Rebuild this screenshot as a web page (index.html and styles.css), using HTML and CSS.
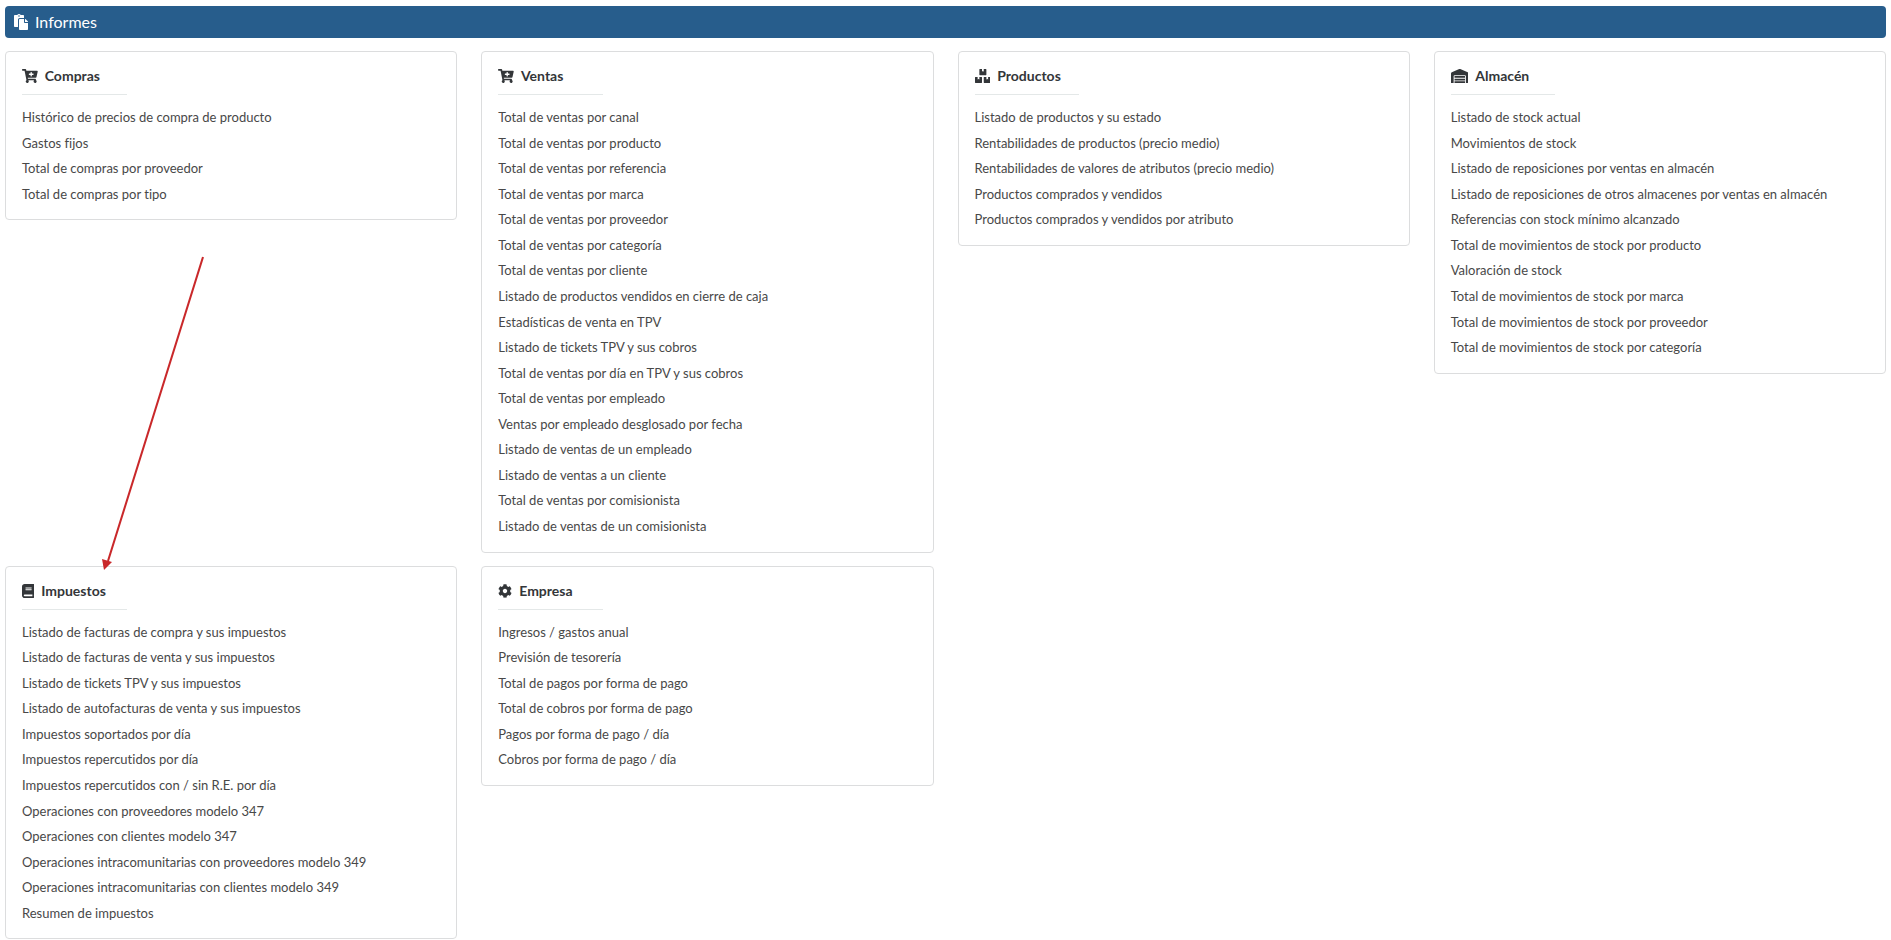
FILE: index.html
```html
<!DOCTYPE html>
<html lang="es">
<head>
    <meta charset="UTF-8">
    <meta name="viewport" content="width=device-width, initial-scale=1.0">
    <title>Informes</title>
    <link rel="stylesheet" href="styles.css">
</head>
<body>
    <!-- Title bar -->
    <header class="title-bar">
        <svg class="icon" viewBox="0 0 512 512" aria-hidden="true"><path d="M128 184c0-30.879 25.122-56 56-56h136V56c0-13.255-10.745-24-24-24h-80.61C204.306 12.89 183.637 0 160 0s-44.306 12.89-55.39 32H24C10.745 32 0 42.745 0 56v336c0 13.255 10.745 24 24 24h104V184zm32-144c13.255 0 24 10.745 24 24s-10.745 24-24 24-24-10.745-24-24 10.745-24 24-24zm184 248h104v200c0 13.255-10.745 24-24 24H184c-13.255 0-24-10.745-24-24V184c0-13.255 10.745-24 24-24h136v104c0 13.2 10.8 24 24 24zm104-38.059V256h-96v-96h6.059a24 24 0 0 1 16.97 7.029l65.941 65.941a24.002 24.002 0 0 1 7.03 16.971z"/></svg>
        <h1>Informes</h1>
    </header>

    <main class="reports">
        <section class="card">
            <h2>
                <svg class="icon" viewBox="0 0 576 512" aria-hidden="true"><path d="M504.717 320H211.572l6.545 32h268.418c15.401 0 26.816 14.301 23.403 29.319l-5.517 24.276C523.112 414.668 536 433.828 536 456c0 31.202-25.519 56.444-56.824 55.994-29.823-.429-54.35-24.631-55.155-54.447-.44-16.287 6.085-31.049 16.803-41.548H231.176C241.553 426.165 248 440.326 248 456c0 31.813-26.528 57.431-58.67 55.938-28.54-1.325-51.751-24.385-53.251-52.917-1.158-22.034 10.436-41.455 28.051-51.586L93.883 64H24C10.745 64 0 53.255 0 40V24C0 10.745 10.745 0 24 0h102.529c11.401 0 21.228 8.021 23.513 19.19L159.208 64H551.99c15.401 0 26.816 14.301 23.403 29.319l-47.273 208C525.637 312.246 515.923 320 504.717 320zM408 168h-48v-40c0-8.837-7.163-16-16-16h-16c-8.837 0-16 7.163-16 16v40h-48c-8.837 0-16 7.163-16 16v16c0 8.837 7.163 16 16 16h48v40c0 8.837 7.163 16 16 16h16c8.837 0 16-7.163 16-16v-40h48c8.837 0 16-7.163 16-16v-16c0-8.837-7.163-16-16-16z"/></svg>
                Compras
            </h2>
            <ul>
                <li><a href="#">Histórico de precios de compra de producto</a></li>
                <li><a href="#">Gastos fijos</a></li>
                <li><a href="#">Total de compras por proveedor</a></li>
                <li><a href="#">Total de compras por tipo</a></li>
            </ul>
        </section>

        <section class="card">
            <h2>
                <svg class="icon" viewBox="0 0 576 512" aria-hidden="true"><path d="M504.717 320H211.572l6.545 32h268.418c15.401 0 26.816 14.301 23.403 29.319l-5.517 24.276C523.112 414.668 536 433.828 536 456c0 31.202-25.519 56.444-56.824 55.994-29.823-.429-54.35-24.631-55.155-54.447-.44-16.287 6.085-31.049 16.803-41.548H231.176C241.553 426.165 248 440.326 248 456c0 31.813-26.528 57.431-58.67 55.938-28.54-1.325-51.751-24.385-53.251-52.917-1.158-22.034 10.436-41.455 28.051-51.586L93.883 64H24C10.745 64 0 53.255 0 40V24C0 10.745 10.745 0 24 0h102.529c11.401 0 21.228 8.021 23.513 19.19L159.208 64H551.99c15.401 0 26.816 14.301 23.403 29.319l-47.273 208C525.637 312.246 515.923 320 504.717 320zM408 168h-48v-40c0-8.837-7.163-16-16-16h-16c-8.837 0-16 7.163-16 16v40h-48c-8.837 0-16 7.163-16 16v16c0 8.837 7.163 16 16 16h48v40c0 8.837 7.163 16 16 16h16c8.837 0 16-7.163 16-16v-40h48c8.837 0 16-7.163 16-16v-16c0-8.837-7.163-16-16-16z"/></svg>
                Ventas
            </h2>
            <ul>
                <li><a href="#">Total de ventas por canal</a></li>
                <li><a href="#">Total de ventas por producto</a></li>
                <li><a href="#">Total de ventas por referencia</a></li>
                <li><a href="#">Total de ventas por marca</a></li>
                <li><a href="#">Total de ventas por proveedor</a></li>
                <li><a href="#">Total de ventas por categoría</a></li>
                <li><a href="#">Total de ventas por cliente</a></li>
                <li><a href="#">Listado de productos vendidos en cierre de caja</a></li>
                <li><a href="#">Estadísticas de venta en TPV</a></li>
                <li><a href="#">Listado de tickets TPV y sus cobros</a></li>
                <li><a href="#">Total de ventas por día en TPV y sus cobros</a></li>
                <li><a href="#">Total de ventas por empleado</a></li>
                <li><a href="#">Ventas por empleado desglosado por fecha</a></li>
                <li><a href="#">Listado de ventas de un empleado</a></li>
                <li><a href="#">Listado de ventas a un cliente</a></li>
                <li><a href="#">Total de ventas por comisionista</a></li>
                <li><a href="#">Listado de ventas de un comisionista</a></li>
            </ul>
        </section>

        <section class="card">
            <h2>
                <svg class="icon" viewBox="0 0 576 512" aria-hidden="true"><path d="M560 288h-80v96l-32-21.300-32 21.300v-96h-80c-8.800 0-16 7.200-16 16v192c0 8.800 7.200 16 16 16h224c8.800 0 16-7.200 16-16V304c0-8.800-7.200-16-16-16zm-384-64h224c8.800 0 16-7.200 16-16V16c0-8.800-7.200-16-16-16h-80v96l-32-21.300L256 96V0h-80c-8.800 0-16 7.200-16 16v192c0 8.800 7.200 16 16 16zm64 64h-80v96l-32-21.300L96 384v-96H16c-8.800 0-16 7.200-16 16v192c0 8.800 7.200 16 16 16h224c8.800 0 16-7.200 16-16V304c0-8.800-7.200-16-16-16z"/></svg>
                Productos
            </h2>
            <ul>
                <li><a href="#">Listado de productos y su estado</a></li>
                <li><a href="#">Rentabilidades de productos (precio medio)</a></li>
                <li><a href="#">Rentabilidades de valores de atributos (precio medio)</a></li>
                <li><a href="#">Productos comprados y vendidos</a></li>
                <li><a href="#">Productos comprados y vendidos por atributo</a></li>
            </ul>
        </section>

        <section class="card">
            <h2>
                <svg class="icon" viewBox="0 0 640 512" aria-hidden="true"><path d="M504 352H136.400c-4.400 0-8 3.600-8 8l-.1 48c0 4.400 3.600 8 8 8H504c4.400 0 8-3.600 8-8v-48c0-4.400-3.600-8-8-8zm0 96H136.100c-4.400 0-8 3.600-8 8l-.1 48c0 4.400 3.600 8 8 8h368c4.400 0 8-3.600 8-8v-48c0-4.400-3.600-8-8-8zm0-192H136.600c-4.400 0-8 3.600-8 8l-.1 48c0 4.400 3.600 8 8 8H504c4.400 0 8-3.600 8-8v-48c0-4.400-3.600-8-8-8zm106.500-139L338.400 3.700a48.150 48.150 0 0 0-36.900 0L29.500 117C11.700 124.500 0 141.900 0 161.300V504c0 4.400 3.600 8 8 8h80c4.400 0 8-3.600 8-8V256c0-17.600 14.600-32 32.600-32h382.800c18 0 32.600 14.400 32.600 32v248c0 4.400 3.600 8 8 8h80c4.400 0 8-3.600 8-8V161.300c0-19.400-11.700-36.800-29.500-44.300z"/></svg>
                Almacén
            </h2>
            <ul>
                <li><a href="#">Listado de stock actual</a></li>
                <li><a href="#">Movimientos de stock</a></li>
                <li><a href="#">Listado de reposiciones por ventas en almacén</a></li>
                <li><a href="#">Listado de reposiciones de otros almacenes por ventas en almacén</a></li>
                <li><a href="#">Referencias con stock mínimo alcanzado</a></li>
                <li><a href="#">Total de movimientos de stock por producto</a></li>
                <li><a href="#">Valoración de stock</a></li>
                <li><a href="#">Total de movimientos de stock por marca</a></li>
                <li><a href="#">Total de movimientos de stock por proveedor</a></li>
                <li><a href="#">Total de movimientos de stock por categoría</a></li>
            </ul>
        </section>

        <section class="card">
            <!-- Arrow pointing at the tax reports -->
            <svg class="arrow" viewBox="0 0 104 316" aria-hidden="true">
                <line x1="101" y1="2" x2="6" y2="306"/>
                <path d="M2 315L0 304L10 307Z"/>
            </svg>
            <h2>
                <svg class="icon" viewBox="0 0 448 512" aria-hidden="true"><path d="M448 360V24c0-13.300-10.700-24-24-24H96C43 0 0 43 0 96v320c0 53 43 96 96 96h328c13.300 0 24-10.700 24-24v-16c0-7.500-3.500-14.300-8.900-18.700-4.200-15.400-4.200-59.300 0-74.700 5.400-4.300 8.900-11.100 8.900-18.600zM128 134c0-3.300 2.700-6 6-6h212c3.300 0 6 2.700 6 6v20c0 3.300-2.700 6-6 6H134c-3.300 0-6-2.700-6-6v-20zm0 64c0-3.300 2.700-6 6-6h212c3.300 0 6 2.700 6 6v20c0 3.300-2.700 6-6 6H134c-3.300 0-6-2.700-6-6v-20zm253.400 250H96c-17.700 0-32-14.300-32-32 0-17.600 14.400-32 32-32h285.400c-1.900 17.100-1.900 46.900 0 64z"/></svg>
                Impuestos
            </h2>
            <ul>
                <li><a href="#">Listado de facturas de compra y sus impuestos</a></li>
                <li><a href="#">Listado de facturas de venta y sus impuestos</a></li>
                <li><a href="#">Listado de tickets TPV y sus impuestos</a></li>
                <li><a href="#">Listado de autofacturas de venta y sus impuestos</a></li>
                <li><a href="#">Impuestos soportados por día</a></li>
                <li><a href="#">Impuestos repercutidos por día</a></li>
                <li><a href="#">Impuestos repercutidos con / sin R.E. por día</a></li>
                <li><a href="#">Operaciones con proveedores modelo 347</a></li>
                <li><a href="#">Operaciones con clientes modelo 347</a></li>
                <li><a href="#">Operaciones intracomunitarias con proveedores modelo 349</a></li>
                <li><a href="#">Operaciones intracomunitarias con clientes modelo 349</a></li>
                <li><a href="#">Resumen de impuestos</a></li>
            </ul>
        </section>

        <section class="card">
            <h2>
                <svg class="icon" viewBox="0 0 512 512" aria-hidden="true"><path d="M487.400 315.700l-42.600-24.600c4.300-23.200 4.300-47 0-70.200l42.600-24.600c4.900-2.800 7.100-8.600 5.500-14-11.100-35.600-30-67.800-54.700-94.600-3.800-4.100-10-5.100-14.800-2.300L380.800 110c-17.900-15.400-38.500-27.300-60.800-35.100V25.800c0-5.600-3.900-10.500-9.400-11.700-36.700-8.200-74.300-7.800-109.200 0-5.500 1.200-9.400 6.100-9.400 11.700V75c-22.200 7.900-42.800 19.800-60.800 35.100L88.700 85.500c-4.900-2.800-11-1.900-14.800 2.300-24.700 26.700-43.600 58.900-54.700 94.600-1.700 5.400.6 11.200 5.500 14L67.300 221c-4.300 23.200-4.300 47 0 70.200l-42.600 24.600c-4.900 2.800-7.100 8.600-5.500 14 11.100 35.600 30 67.800 54.700 94.600 3.800 4.100 10 5.100 14.800 2.300l42.600-24.600c17.900 15.400 38.500 27.300 60.800 35.100v49.200c0 5.600 3.900 10.500 9.400 11.700 36.700 8.200 74.300 7.800 109.200 0 5.500-1.200 9.400-6.100 9.400-11.700v-49.200c22.200-7.900 42.800-19.800 60.800-35.100l42.600 24.600c4.900 2.800 11 1.900 14.800-2.300 24.700-26.700 43.600-58.900 54.700-94.600 1.500-5.500-.7-11.300-5.600-14.100zM256 336c-44.100 0-80-35.900-80-80s35.900-80 80-80 80 35.900 80 80-35.900 80-80 80z"/></svg>
                Empresa
            </h2>
            <ul>
                <li><a href="#">Ingresos / gastos anual</a></li>
                <li><a href="#">Previsión de tesorería</a></li>
                <li><a href="#">Total de pagos por forma de pago</a></li>
                <li><a href="#">Total de cobros por forma de pago</a></li>
                <li><a href="#">Pagos por forma de pago / día</a></li>
                <li><a href="#">Cobros por forma de pago / día</a></li>
            </ul>
        </section>
    </main>
</body>
</html>
```
FILE: styles.css
```css
* {
    box-sizing: border-box;
}

body {
    margin: 0;
    padding: 6px 5px 0;
    background-color: #ffffff;
    color: #333639;
    font-family: Lato, sans-serif;
    font-size: 13px;
    line-height: 1.4285;
}

.icon {
    height: 1em;
    fill: currentColor;
}

/* Title bar */
.title-bar {
    display: flex;
    align-items: center;
    gap: 5px;
    height: 32px;
    padding: 0 9px;
    border-radius: 4px;
    background-color: #275d8c;
    color: #ffffff;
    font-size: 16px;
}

.title-bar h1 {
    margin: 0;
    font-size: 16px;
    font-weight: 400;
}

/* Report cards */
.reports {
    display: grid;
    grid-template-columns: repeat(4, 1fr);
    align-items: start;
    gap: 13px 24px;
    margin-top: 13px;
}

.card {
    position: relative;
    padding: 14px 16px 12px;
    border: 1px solid #dcddde;
    border-radius: 4px;
}

.card h2 {
    display: flex;
    align-items: center;
    gap: 7px;
    margin: 0;
    font-size: 14px;
    font-weight: 700;
    line-height: 20px;
}

.card ul {
    margin: 0;
    padding: 0;
    list-style: none;
    color: #484848;
    font-variant-ligatures: none;
}

/* Short rule under the heading */
.card ul::before {
    content: "";
    display: block;
    width: 25%;
    margin: 8px 0 10px;
    border-top: 1px solid #e4e8e8;
}

.card li {
    padding: 3px 0 4px;
}

.card a {
    display: block;
    color: inherit;
    text-decoration: none;
}

.card a:hover {
    color: #275d8c;
}

/* Arrow drawn over the cards */
.arrow {
    position: absolute;
    left: 96px;
    bottom: 100%;
    width: 104px;
    height: 316px;
    margin-bottom: -4px;
    fill: #c9282a;
    pointer-events: none;
}

.arrow line {
    stroke: #c9282a;
    stroke-width: 2;
}
```
